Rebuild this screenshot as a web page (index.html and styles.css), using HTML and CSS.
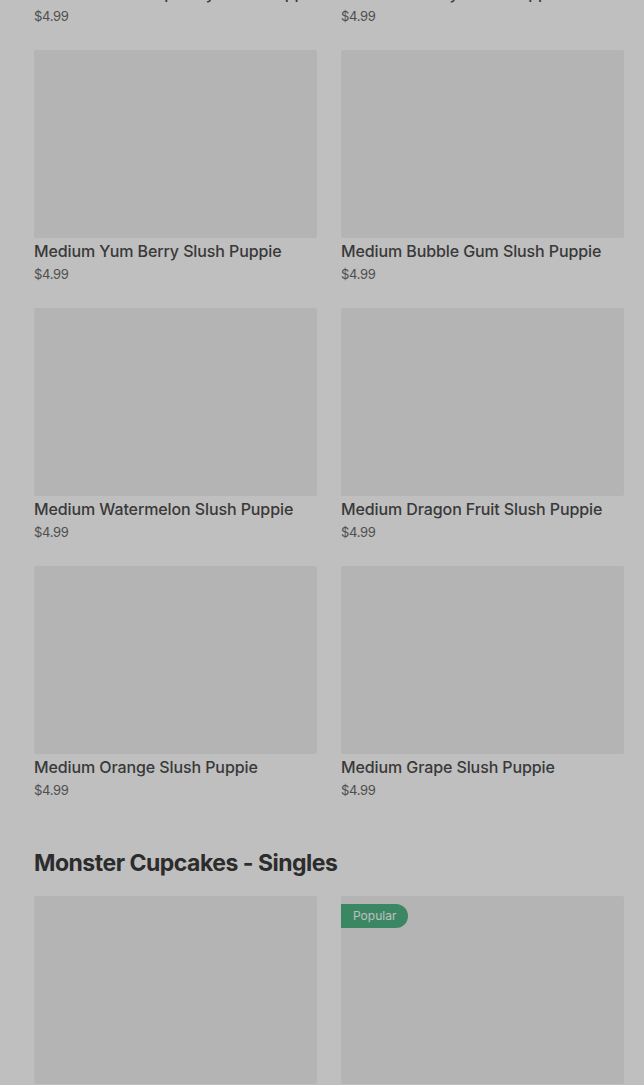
FILE: index.html
```html
<!DOCTYPE html>
<html lang="en">
<head>
    <meta charset="UTF-8">
    <meta name="viewport" content="width=device-width, initial-scale=1.0">
    <title>Menu</title>
    <link rel="stylesheet" href="styles.css">
</head>
<body>

    <div class="menu">
        <!-- Slush Puppie -->
        <div class="grid grid-scrolled">
            <div class="item">
                <div class="thumb"></div>
                <div class="name">Medium Blue Raspberry Slush Puppie</div>
                <div class="price">$4.99</div>
            </div>
            <div class="item">
                <div class="thumb"></div>
                <div class="name">Medium Cherry Slush Puppie</div>
                <div class="price">$4.99</div>
            </div>
            <div class="item">
                <div class="thumb"></div>
                <div class="name">Medium Yum Berry Slush Puppie</div>
                <div class="price">$4.99</div>
            </div>
            <div class="item">
                <div class="thumb"></div>
                <div class="name">Medium Bubble Gum Slush Puppie</div>
                <div class="price">$4.99</div>
            </div>
            <div class="item">
                <div class="thumb"></div>
                <div class="name">Medium Watermelon Slush Puppie</div>
                <div class="price">$4.99</div>
            </div>
            <div class="item">
                <div class="thumb"></div>
                <div class="name">Medium Dragon Fruit Slush Puppie</div>
                <div class="price">$4.99</div>
            </div>
            <div class="item">
                <div class="thumb"></div>
                <div class="name">Medium Orange Slush Puppie</div>
                <div class="price">$4.99</div>
            </div>
            <div class="item">
                <div class="thumb"></div>
                <div class="name">Medium Grape Slush Puppie</div>
                <div class="price">$4.99</div>
            </div>
        </div>

        <h2 class="section-title">Monster Cupcakes - Singles</h2>
        <div class="grid">
            <div class="item">
                <div class="thumb"></div>
            </div>
            <div class="item">
                <div class="thumb">
                    <span class="badge">Popular</span>
                </div>
            </div>
        </div>
    </div>

    <!-- fond assombri du modal -->
    <div class="backdrop"></div>

</body>
</html>
```

FILE: styles.css
```css
body {
    margin: 0;
    background: #fff;
    font-family: Inter, "Noto Sans", sans-serif;
    color: #4d4d4d;
    overflow: hidden;
    height: 1085px;
}

.menu {
    padding: 0 20px 0 34px;
}

.grid {
    display: grid;
    grid-template-columns: 283px 283px;
    column-gap: 24px;
    row-gap: 25px;
}

.grid-scrolled {
    margin-top: -208px;
}

.thumb {
    position: relative;
    height: 188px;
    background: #f1f1f1;
    border-radius: 2px;
}

.name {
    margin-top: 2px;
    font-size: 16px;
    line-height: 22px;
    font-weight: 500;
    white-space: nowrap;
    letter-spacing: -0.1px;
}

.price {
    margin-top: 3px;
    font-size: 13px;
    line-height: 18px;
    color: #6a6a6a;
    letter-spacing: -0.3px;
}

.section-title {
    margin: 49px 0 18px;
    font-size: 23px;
    line-height: 30px;
    font-weight: 700;
    letter-spacing: -0.5px;
    color: #3b3b3b;
}

.badge {
    position: absolute;
    top: 8px;
    left: 0;
    padding: 0 12px;
    height: 24px;
    line-height: 24px;
    font-size: 12px;
    color: #fff;
    background: #4fb585;
    border-radius: 0 12px 12px 0;
}

.backdrop {
    position: fixed;
    inset: 0;
    background: rgba(0, 0, 0, 0.25);
}
```
